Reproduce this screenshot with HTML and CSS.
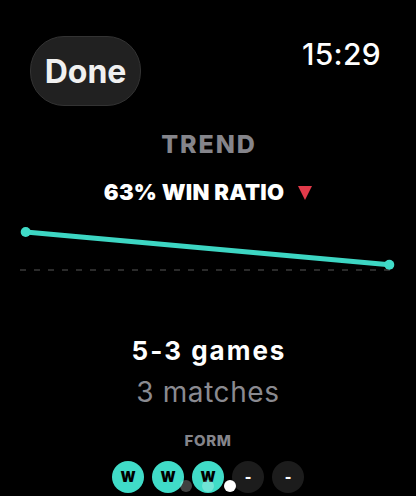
FILE: index.html
```html
<!DOCTYPE html>
<html>
<head>
<meta charset="utf-8">
<link rel="stylesheet" href="styles.css">
</head>
<body>
<div class="screen">
  <div class="header">
    <div class="done">Done</div>
    <div class="time">15:29</div>
  </div>
  <div class="title">TREND</div>
  <div class="ratio">63% WIN RATIO <span class="tri"></span></div>
  <svg class="chart" width="416" height="60" viewBox="0 0 416 60">
    <line x1="20" y1="50" x2="392" y2="50" stroke="#3a3a3a" stroke-width="1.5" stroke-dasharray="6 8"/>
    <line x1="25.7" y1="12" x2="389.3" y2="44.7" stroke="#3dd6c3" stroke-width="5" stroke-linecap="round"/>
    <circle cx="25.7" cy="12" r="5" fill="#40dcc8"/>
    <circle cx="389.3" cy="44.7" r="5" fill="#40dcc8"/>
  </svg>
  <div class="games">5-3 games</div>
  <div class="matches">3 matches</div>
  <div class="form-label">FORM</div>
  <div class="form">
    <div class="pill win">W</div>
    <div class="pill win">W</div>
    <div class="pill win">W</div>
    <div class="pill none">-</div>
    <div class="pill none">-</div>
  </div>
  <div class="pager">
    <span class="dot dim"></span>
    <span class="dot dim"></span>
    <span class="dot on"></span>
  </div>
</div>
</body>
</html>
```
FILE: styles.css
```css
html, body {
  margin: 0;
  padding: 0;
  background: #000;
}
.screen {
  position: relative;
  width: 416px;
  height: 496px;
  overflow: hidden;
  font-family: Inter, "Liberation Sans", sans-serif;
  color: #fff;
  display: flex;
  flex-direction: column;
  align-items: center;
}
.header {
  align-self: stretch;
  display: flex;
  justify-content: space-between;
  align-items: flex-start;
  padding: 36px 35px 0 30px;
}
.done {
  width: 109px;
  height: 66px;
  border-radius: 34px;
  background: #212121;
  border: 1px solid #333;
  display: flex;
  align-items: center;
  justify-content: center;
  font-size: 32px;
  font-weight: 700;
  line-height: 1;
  color: #f0f0f0;
  padding-top: 2px;
  box-sizing: content-box;
}
.time {
  margin-top: 3px;
  font-size: 30px;
  font-weight: 500;
  line-height: 1;
  letter-spacing: 0.3px;
}
.title {
  margin-top: 26px;
  font-size: 25px;
  font-weight: 800;
  line-height: 1;
  color: #85858b;
  letter-spacing: 1.9px;
  padding-left: 1.9px;
}
.ratio {
  margin-top: 24px;
  font-size: 22px;
  font-weight: 900;
  line-height: 1;
  letter-spacing: 0.25px;
  display: flex;
  align-items: center;
  gap: 4px;
}
.tri {
  width: 0;
  height: 0;
  border-left: 7px solid transparent;
  border-right: 7px solid transparent;
  border-top: 14px solid #e23a4a;
  margin-left: 10px;
  margin-top: 2px;
}
.chart {
  display: block;
  margin-top: 17px;
}
.games {
  margin-top: 58px;
  font-size: 26px;
  font-weight: 700;
  line-height: 1;
  letter-spacing: 2px;
  padding-left: 2px;
}
.matches {
  margin-top: 14px;
  font-size: 28px;
  font-weight: 400;
  line-height: 1;
  color: #8a8a90;
  letter-spacing: 0.6px;
}
.form-label {
  margin-top: 27px;
  font-size: 15px;
  font-weight: 800;
  line-height: 1;
  color: #85858b;
  letter-spacing: 0.6px;
}
.form {
  margin-top: 13px;
  display: flex;
  gap: 8px;
}
.pill {
  width: 32px;
  height: 32px;
  border-radius: 50%;
  display: flex;
  align-items: center;
  justify-content: center;
  font-size: 14px;
  font-weight: 900;
  line-height: 1;
}
.win {
  background: #40dcc8;
  color: #000;
}
.none {
  background: #1c1c1c;
  color: #fff;
}
.pager {
  position: absolute;
  left: 180px;
  top: 480px;
  display: flex;
  gap: 10px;
}
.dot {
  width: 12px;
  height: 12px;
  border-radius: 50%;
}
.dot.dim {
  background: rgba(255, 255, 255, 0.25);
}
.dot.on {
  background: #fff;
}
```
